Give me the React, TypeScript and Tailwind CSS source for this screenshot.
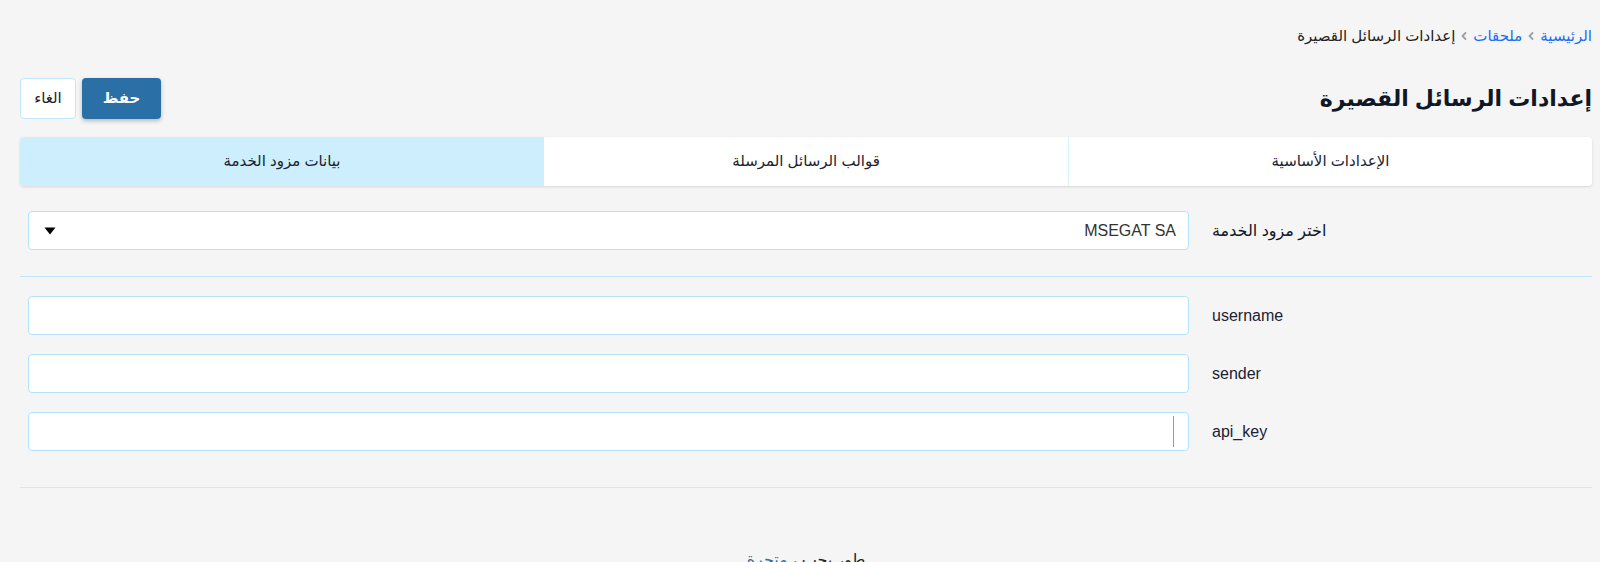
import React from 'react'

const fields = ['username', 'sender', 'api_key']

const Chevron = () => (
  <svg width="10" height="10" viewBox="0 0 10 10" className="mx-[4px]">
    <path d="M6.5 2 L3.5 5 L6.5 8" fill="none" stroke="#9aa0a6" strokeWidth="1.8" strokeLinecap="round" strokeLinejoin="round" />
  </svg>
)

const App = () => {
  return (
    <div
      dir="rtl"
      className="min-h-screen bg-[#f5f5f5] pl-5 pr-2 text-[#1b2233] font-['Liberation_Sans','DejaVu_Sans',sans-serif]"
    >
      {/* breadcrumb */}
      <div className="flex items-center pt-[26px] h-[46px] text-[15px]">
        <a className="text-[#1a6ef5]">الرئيسية</a>
        <Chevron />
        <a className="text-[#1a6ef5]">ملحقات</a>
        <Chevron />
        <span className="text-[#222]">إعدادات الرسائل القصيرة</span>
      </div>

      {/* header */}
      <div className="flex items-center justify-between mt-[32px]">
        <h1 className="text-[22px] font-bold text-[#101828]">إعدادات الرسائل القصيرة</h1>
        <div className="flex flex-row-reverse gap-[6px]">
          <button className="h-[41px] w-[56px] rounded-[4px] border border-[#bfe9fb] bg-white text-[15px] text-[#222]">
            الغاء
          </button>
          <button className="h-[41px] w-[79px] rounded-[4px] bg-[#2a70a6] text-[15px] font-bold text-white shadow-[0_2px_4px_rgba(0,0,0,0.25)]">
            حفظ
          </button>
        </div>
      </div>

      {/* tabs */}
      <div className="mt-[18px] grid grid-cols-3 h-[49px] bg-white rounded-[4px] shadow-[0_1px_3px_rgba(0,0,0,0.12)] overflow-hidden text-[15px]">
        <div className="flex items-center justify-center border-l border-[#d9f1fc]">الإعدادات الأساسية</div>
        <div className="flex items-center justify-center">قوالب الرسائل المرسلة</div>
        <div className="flex items-center justify-center bg-[#cdeffd]">بيانات مزود الخدمة</div>
      </div>

      {/* provider select */}
      <div className="px-2 mt-[25px] grid grid-cols-[372px_1fr] gap-x-[23px] items-center">
        <label className="text-left text-[16px] text-[#0f1626]">اختر مزود الخدمة</label>
        <div className="relative h-[39px] rounded-[4px] border border-[#b3e3fa] bg-white flex items-center justify-between px-[12px]">
          <span className="text-[16px] text-[#333]">MSEGAT SA</span>
          <svg width="12" height="8" viewBox="0 0 12 8" className="ml-[3px]">
            <path d="M0.5 0.5 H11.5 L6 7.5 Z" fill="#000" />
          </svg>
        </div>
      </div>

      <div className="mt-[26px] border-t border-[#bfe6f8]" />

      {/* credentials */}
      <div className="px-2 mt-[19px] flex flex-col gap-[19px]">
        {fields.map((f, i) => (
          <div key={f} className="grid grid-cols-[372px_1fr] gap-x-[23px] items-center">
            <label dir="ltr" className="text-left text-[16px]">{f}</label>
            <div className="relative h-[39px] rounded-[4px] border border-[#b3e3fa] bg-white">
              {i === 2 && (
                <span className="absolute right-[14px] top-[3px] h-[31px] w-px bg-[#999]" />
              )}
            </div>
          </div>
        ))}
      </div>

      <div className="mt-[36px] border-t border-[#e3e3e3]" />

      {/* footer */}
      <div className="mt-[60px] text-center text-[16px] text-[#222]">
        طور بحب ، <a className="text-[#2a70a6]">متجرة</a>
      </div>
    </div>
  )
}

export default App
